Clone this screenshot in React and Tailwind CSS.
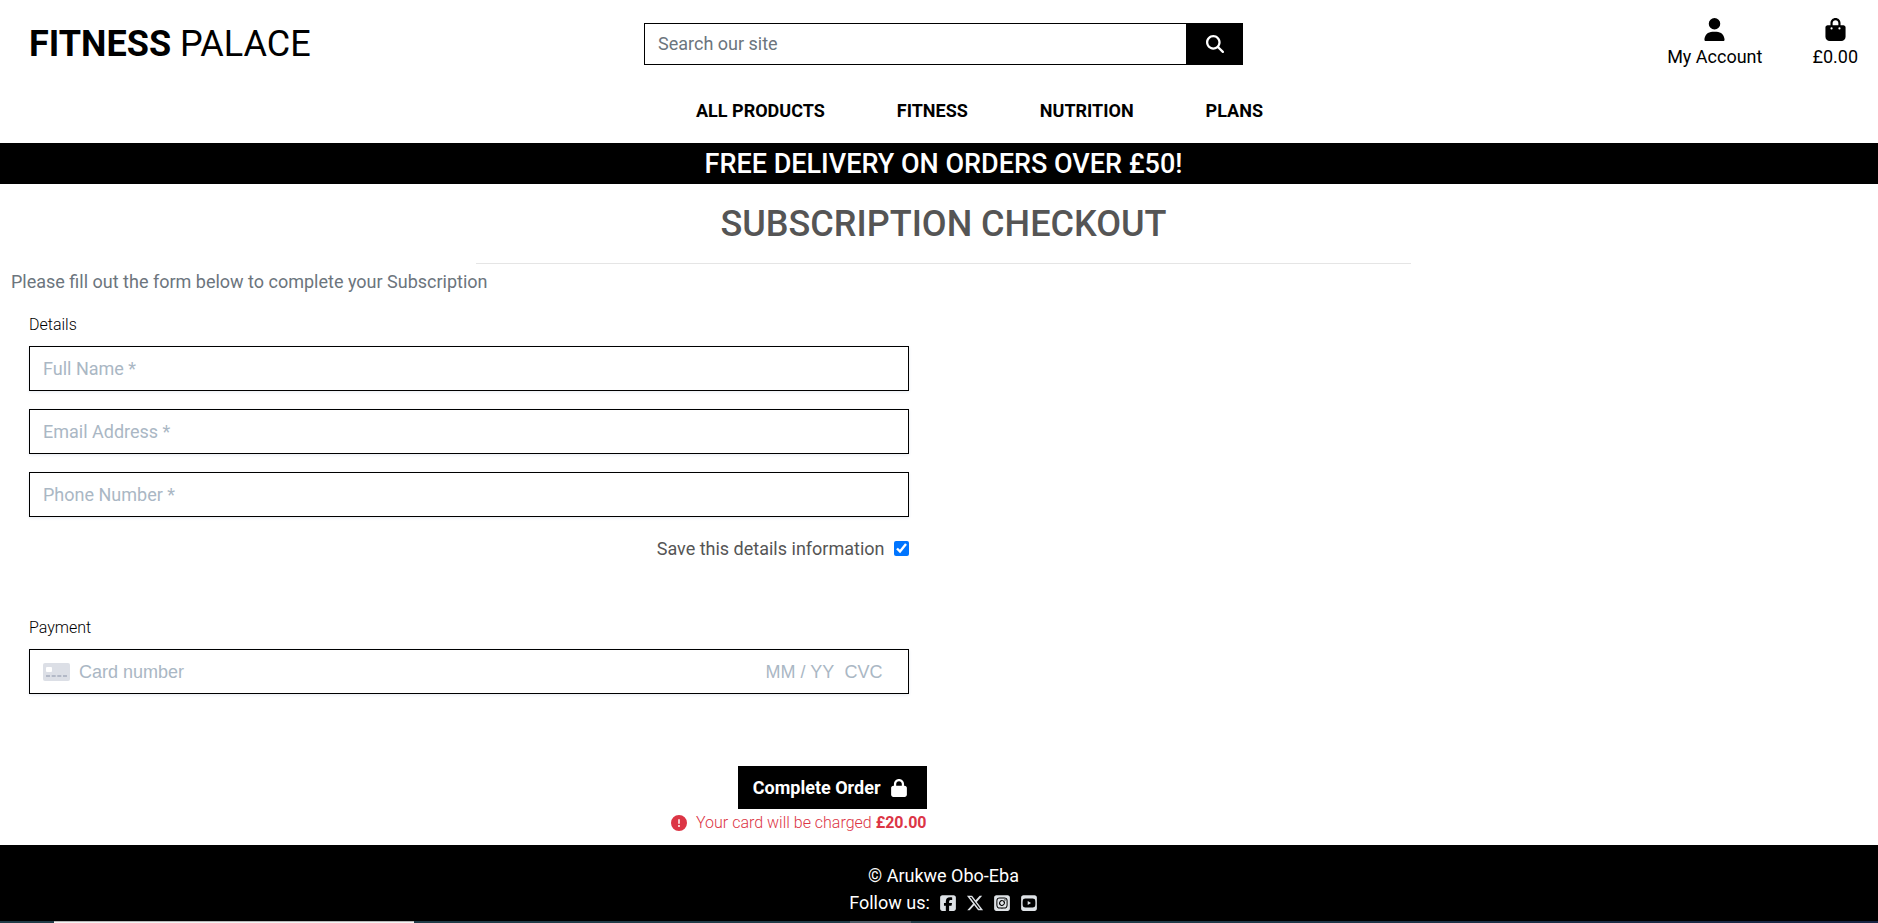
import React, { useState } from "react";
import {
  FaUser,
  FaBagShopping,
  FaMagnifyingGlass,
  FaLock,
  FaCircleExclamation,
  FaSquareFacebook,
  FaXTwitter,
  FaSquareInstagram,
  FaSquareYoutube,
} from "react-icons/fa6";

const NAV = ["ALL PRODUCTS", "FITNESS", "NUTRITION", "PLANS"];

const FIELDS = [
  { name: "full_name", type: "text", label: "Full Name *" },
  { name: "email", type: "email", label: "Email Address *" },
  { name: "phone_number", type: "tel", label: "Phone Number *" },
];

const SOCIALS = [
  { label: "Facebook", Icon: FaSquareFacebook },
  { label: "X", Icon: FaXTwitter },
  { label: "Instagram", Icon: FaSquareInstagram },
  { label: "YouTube", Icon: FaSquareYoutube },
];

function CardIcon() {
  return (
    <svg viewBox="0 0 27 18" className="h-[18px] w-[27px] shrink-0" aria-hidden="true">
      <rect width="27" height="18" rx="2" fill="#dcdfe6" />
      <rect x="3" y="4" width="6" height="5" rx="1" fill="#fff" />
      <path d="M3 13h4M8.7 13h4M14.300 13h4M20 13h4" stroke="#b3b9c7" strokeWidth="2" />
    </svg>
  );
}

function Header() {
  return (
    <header className="text-black">
      <div className="grid h-[87px] grid-cols-3 items-center">
        <a href="#home" className="pl-5 text-4xl leading-10">
          <strong className="font-bold">FITNESS</strong> PALACE
        </a>
        <form className="mx-3 flex h-[42px]" onSubmit={(e) => e.preventDefault()}>
          <input
            type="search"
            aria-label="Search our site"
            placeholder="Search our site"
            className="min-w-0 flex-1 border border-black px-[13px] outline-none placeholder:text-[#6c757d]"
          />
          <button type="submit" aria-label="Search" className="flex w-14 items-center justify-center bg-black text-white">
            <FaMagnifyingGlass className="size-[18px]" />
          </button>
        </form>
        <div className="flex items-center justify-end gap-[50px] pr-5 leading-[27px]">
          <a href="#account" className="flex flex-col items-center gap-[2px]">
            <FaUser className="size-[23px]" />
            My Account
          </a>
          <a href="#bag" className="flex flex-col items-center gap-[2px]">
            <FaBagShopping className="size-[23px]" />
            £0.00
          </a>
        </div>
      </div>
      <nav className="flex h-14 justify-center gap-[72px] pt-[10px] pl-[72px] leading-[27px] font-bold">
        {NAV.map((item) => (
          <a key={item} href="#shop">
            {item}
          </a>
        ))}
      </nav>
    </header>
  );
}

function CheckoutForm() {
  const [save, setSave] = useState(true);
  const box = "h-[45px] w-full border border-black bg-white shadow-[0_1px_3px_0_#e6ebf1]";
  return (
    <form className="w-1/2" onSubmit={(e) => e.preventDefault()}>
      <fieldset className="mt-[18px] pr-[35px] pl-5">
        <legend className="mb-[9px] text-base leading-6 font-light text-black">Details</legend>
        <div className="flex flex-col gap-[18px]">
          {FIELDS.map((f) => (
            <input
              key={f.name}
              name={f.name}
              type={f.type}
              aria-label={f.label}
              placeholder={f.label}
              className={`${box} px-[13px] outline-none placeholder:text-[#aab7c4]`}
            />
          ))}
        </div>
        <label className="mt-[18px] flex items-center justify-end gap-[9px] leading-[27px] text-[#555]">
          Save this details information
          <input
            type="checkbox"
            checked={save}
            onChange={(e) => setSave(e.target.checked)}
            className="size-[15px] accent-[#0075ff]"
          />
        </label>
      </fieldset>
      <fieldset className="mt-[54px] pr-[35px] pl-5">
        <legend className="mb-[9px] text-base leading-6 font-light text-black">Payment</legend>
        <div className={`${box} flex items-center pr-[23px] pl-[13px] font-['Liberation_Sans',Arial,sans-serif]`}>
          <CardIcon />
          <input
            aria-label="Card number"
            placeholder="Card number"
            className="ml-[9px] min-w-0 flex-1 outline-none placeholder:text-[#aab7c4]"
          />
          <input
            aria-label="Expiry date"
            placeholder="MM / YY"
            className="w-[79px] outline-none placeholder:text-[#aab7c4]"
          />
          <input aria-label="CVC" placeholder="CVC" className="w-10 outline-none placeholder:text-[#aab7c4]" />
        </div>
      </fieldset>
      <div className="mt-[72px] mr-[17px] flex flex-col items-end">
        <button type="submit" className="flex h-[43px] items-center gap-[9px] bg-black pr-[19px] pl-[15px] font-bold text-white">
          Complete Order
          <FaLock className="size-[18px]" />
        </button>
        <p className="mt-[2px] flex items-center gap-[9px] text-base leading-6 font-light text-[#dc3545]">
          <FaCircleExclamation className="size-4" />
          <span>
            Your card will be charged <strong className="font-bold">£20.00</strong>
          </span>
        </p>
      </div>
    </form>
  );
}

function Footer() {
  return (
    <footer className="mt-[10px] flex h-[76px] flex-col items-center bg-black pt-[17px] pl-[9px] leading-[27px] text-white">
      <p>© Arukwe Obo-Eba</p>
      <div className="flex items-center gap-[9px]">
        <span>Follow us:</span>
        {SOCIALS.map(({ label, Icon }) => (
          <a key={label} href="#social" aria-label={label} className="text-[#dee2e6]">
            <Icon className="size-[18px]" />
          </a>
        ))}
      </div>
    </footer>
  );
}

function DesktopEdge() {
  return (
    <div className="flex h-[3px] bg-linear-to-r from-[#203c48] from-60% to-[#182444]" aria-hidden="true">
      <div className="ml-[54px] w-[360px] border-t border-[#b8b8b8] bg-[#f3f3f3]" />
      <div className="ml-[436px] w-[61px] bg-[#4c5b66]" />
    </div>
  );
}

export default function App() {
  return (
    <div className="overflow-x-hidden bg-white font-[Roboto,sans-serif] text-lg text-[#212529]">
      <div className="pl-[9px]">
        <Header />
      </div>
      <div className="flex h-[41px] items-center justify-center bg-black pl-[9px] text-[27px] leading-8 font-medium text-white">
        FREE DELIVERY ON ORDERS OVER £50!
      </div>
      <main className="pl-[9px]">
        <h1 className="mt-[19px] text-center text-4xl leading-[43px] font-medium text-[#555]">SUBSCRIPTION CHECKOUT</h1>
        <hr className="mx-auto mt-[17px] w-1/2 border-[#e5e5e5]" />
        <p className="mt-1 pl-[2px] leading-[27px] text-[#6c757d]">Please fill out the form below to complete your Subscription</p>
        <CheckoutForm />
      </main>
      <Footer />
      <DesktopEdge />
    </div>
  );
}
